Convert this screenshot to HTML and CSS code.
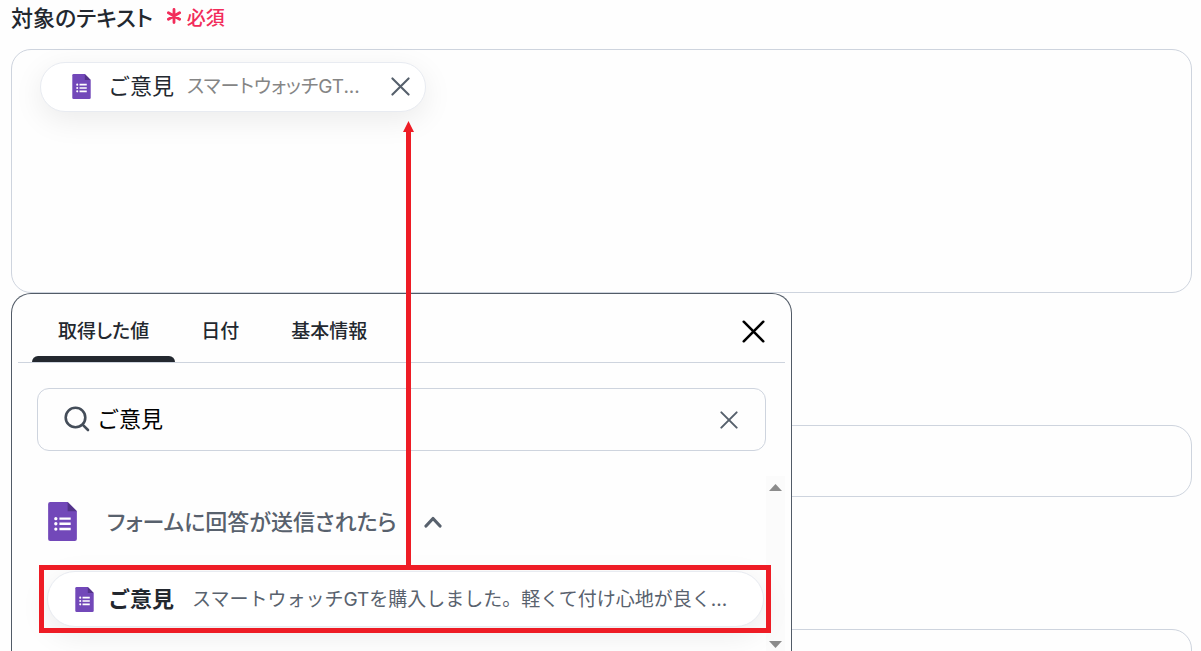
FILE: index.html
```html
<!DOCTYPE html>
<html lang="ja">
<head>
    <title>対象のテキスト</title>
    <meta charset="utf-8">

    <link rel="stylesheet" href="styles.css">

</head>
<body>
<svg class="defs" aria-hidden="true">
    <symbol id="form" viewBox="0 0 28 38">
        <path fill="#7248b9" d="M2 0H19l9 9v27a2 2 0 0 1-2 2H2a2 2 0 0 1-2-2V2a2 2 0 0 1 2-2z"/>
        <path fill="#53338a" d="M19 0l9 9h-9z"/>
        <path fill="#fff" d="M11 15h11v2.400H11zM11 20h11v2.400H11zM11 25.200h11v2.400H11z"/>
        <g fill="#fff">
            <circle cx="7.500" cy="16.200" r="1.600"/>
            <circle cx="7.500" cy="21.200" r="1.600"/>
            <circle cx="7.500" cy="26.400" r="1.600"/>
        </g>
    </symbol>
    <symbol id="cross" viewBox="0 0 20 20">
        <path fill="none" stroke="currentColor" stroke-width="2.200" stroke-linecap="round" d="M1.500 1.500l17 17M18.500 1.500l-17 17"/>
    </symbol>
</svg>

<main class="form">
    <h1 class="label">対象のテキスト
        <span class="required">
            <svg width="14" height="16" viewBox="0 0 14 16"><path fill="none" stroke="currentColor" stroke-width="2.800" stroke-linecap="round" d="M7 1.500v13M1.400 4.700l11.200 6.600M12.600 4.700L1.400 11.300"/></svg>
            必須
        </span>
    </h1>

    <div class="target">
        <div class="box box-large">
            <div class="chip">
                <svg class="icon-small"><use href="#form"/></svg>
                <span class="name">ご意見</span>
                <span class="value">スマートウォッチGT...</span>
                <button type="button" class="close" aria-label="削除"><svg width="19" height="19"><use href="#cross"/></svg></button>
            </div>
        </div>

        <section class="panel">
            <div class="tabs">
                <button type="button" class="tab active">取得した値</button>
                <button type="button" class="tab">日付</button>
                <button type="button" class="tab">基本情報</button>
                <button type="button" class="close close-panel" aria-label="閉じる"><svg width="23" height="23"><use href="#cross"/></svg></button>
            </div>

            <div class="search">
                <svg class="icon-search" width="26" height="26" viewBox="0 0 26 26"><g fill="none" stroke="currentColor" stroke-width="2.600" stroke-linecap="round"><circle cx="11.500" cy="11.500" r="9.800"/><path d="M18.800 18.800l5.200 5.200"/></g></svg>
                <input type="text" aria-label="検索" value="ご意見">
                <button type="button" class="close" aria-label="クリア"><svg width="18" height="18"><use href="#cross"/></svg></button>
            </div>

            <div class="scroll">
                <div class="results">
                    <button type="button" class="group">
                        <svg class="icon-large"><use href="#form"/></svg>
                        <span class="title">フォームに回答が送信されたら</span>
                        <svg width="18" height="12" viewBox="0 0 18 12"><path fill="none" stroke="currentColor" stroke-width="3.200" stroke-linecap="round" stroke-linejoin="round" d="M2 10l7-7.500 7 7.500"/></svg>
                    </button>
                    <div class="marked">
                        <button type="button" class="item">
                            <svg class="icon-small"><use href="#form"/></svg>
                            <span class="name">ご意見</span>
                            <span class="value">スマートウォッチGTを購入しました。軽くて付け心地が良く...</span>
                        </button>
                        <svg class="arrow" width="11" height="445" viewBox="0 0 11 445"><path fill="#ee1c25" d="M5.500 0L11 11H8v434H3V11H0z"/></svg>
                    </div>
                </div>
                <div class="bar">
                    <svg width="13" height="7"><path fill="#8b8b8b" d="M0 7L6.500 0 13 7z"/></svg>
                    <svg width="13" height="7"><path fill="#8b8b8b" d="M0 0h13L6.500 7z"/></svg>
                </div>
            </div>
        </section>
    </div>

    <div class="box"></div>
    <div class="box"></div>
</main>
</body>
</html>
```

FILE: styles.css
```css
html,body{
    margin: 0;
    height: 100%;
    overflow: hidden;
    background: #fefefe;
    color: #23282f;
    font-family: Inter, "Noto Sans CJK JP", sans-serif;
}

*{
    box-sizing: border-box;
}

svg{
    display: block;
    flex: none;
}

button,input{
    margin: 0;
    padding: 0;
    border: 0;
    background: none;
    color: inherit;
    font: inherit;
}

.defs{
    display: none;
}

.form{
    padding: 3px 9px 0 11px;
}

.label{
    display: flex;
    align-items: center;
    gap: 14px;
    height: 30px;
    margin: 0 0 16px;
    padding-bottom: 4px;
    font-size: 22px;
    font-weight: 500;
}

.required{
    display: flex;
    align-items: center;
    gap: 6px;
    color: #f22c5a;
    font-size: 19px;
}

.label,.tab,.title,.chip .value{
    font-feature-settings: "palt";
}

.target{
    position: relative;
}

.box{
    height: 72px;
    margin-bottom: 132px;
    border: 1px solid #ced4de;
    border-radius: 20px;
}

.box-large{
    height: 244px;
    padding: 12px 28px;
}

/* picked value */
.chip,.item{
    display: flex;
    align-items: center;
    border: 1px solid #e8ebf1;
    background: #fff;
    box-shadow: 0 8px 30px rgba(0,0,0,0.08);
    white-space: nowrap;
}

.chip{
    width: fit-content;
    height: 50px;
    padding: 0 15px 2px 31px;
    border-radius: 25px;
}

.name,.value,.title{
    padding-bottom: 4px;
}

.name,.title{
    font-size: 22px;
}

.value{
    color: #858585;
    font-size: 19px;
}

.chip .name{
    margin: 0 13px 0 17px;
}

.chip .close{
    margin-left: 31px;
}

.icon-small{
    width: 19px;
    height: 25px;
}

.icon-large{
    width: 29px;
    height: 39px;
}

.close{
    color: #56606c;
}

/* dropdown */
.panel{
    position: absolute;
    top: 100%;
    left: 0;
    width: 781px;
    max-width: 100%;
    padding: 0 6px;
    border: 1px solid #525b67;
    border-bottom: 0;
    border-radius: 20px 20px 0 0;
    background: #fefefe;
}

.tabs{
    display: flex;
    height: 69px;
    padding: 0 20px 0 14px;
    border-bottom: 1px solid #ced4de;
}

.tab{
    position: relative;
    padding: 2px 26px 0;
    font-size: 19px;
    font-weight: 500;
}

.active::after{
    content: "";
    position: absolute;
    left: 0;
    right: 0;
    bottom: 0;
    height: 6px;
    border-radius: 6px 6px 0 0;
    background: #23282f;
}

.close-panel{
    margin-left: auto;
    padding-top: 7px;
    color: #000;
}

.search{
    display: flex;
    align-items: center;
    height: 63px;
    margin: 25px 19px;
    padding: 0 27px 0 26px;
    border: 1px solid #ced4de;
    border-radius: 12px;
    color: #444d59;
}

.icon-search{
    margin-bottom: 2px;
}

.search input{
    flex: 1;
    min-width: 0;
    margin-left: 7px;
    padding-bottom: 6px;
    color: #000;
    font-size: 22px;
}

.scroll{
    display: flex;
    height: 180px;
}

.results{
    flex: 1;
    min-width: 0;
    padding: 26px 2px 0 29px;
}

.group{
    display: flex;
    align-items: center;
    height: 39px;
    margin: 0 0 30px 1px;
    color: #58616d;
    font-weight: 500;
}

.icon-large{
    margin-right: 30px;
}

.title{
    margin-right: 27px;
}

.marked{
    position: relative;
}

.marked::after{
    content: "";
    position: absolute;
    inset: -6px -7px -6px -8px;
    border: 5px solid #ee1c25;
}

.item{
    width: 100%;
    height: 56px;
    padding: 0 27px;
    border-radius: 28px;
}

.item .name{
    margin: 0 18px 0 14px;
    font-weight: 700;
}

.item .value{
    color: #59626e;
}

.arrow{
    position: absolute;
    bottom: calc(100% + 5px);
    left: 356px;
}

.bar{
    display: flex;
    flex-direction: column;
    align-items: center;
    justify-content: space-between;
    width: 19px;
    padding: 8px 0;
    background: #fbfbfb;
}
```
